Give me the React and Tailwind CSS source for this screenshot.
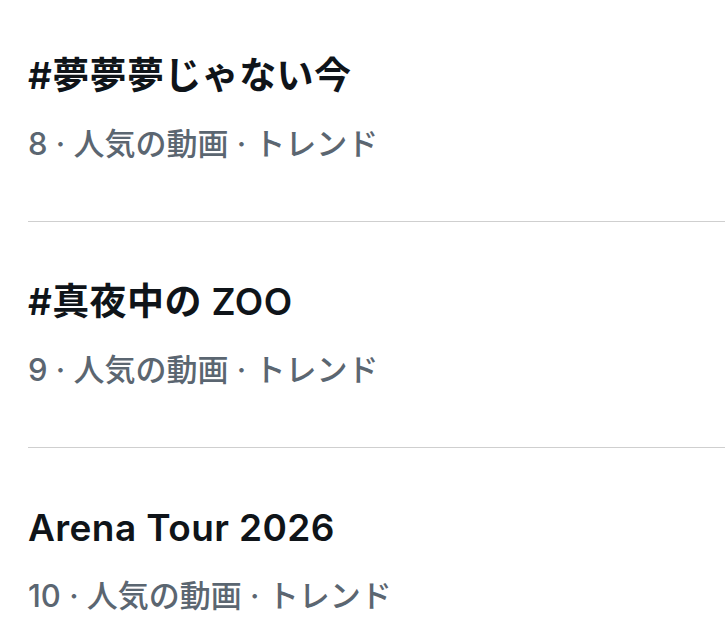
const trends = [
  { title: "#夢夢夢じゃない今", rank: 8 },
  { title: "#真夜中の ZOO", rank: 9 },
  { title: "Arena Tour 2026", rank: 10 },
];

function TrendItem({ title, rank, first, last }) {
  return (
    <div className={`${last ? "" : "border-b border-[#cfcfcf]"}`}>
      <div className={`${first ? "pt-[54px]" : "pt-[58px]"} pb-[57px] pr-4`}>
        <div className="text-[37px] leading-[44px] font-semibold text-[#0f1419] tracking-[0.4px]">
          {title}
        </div>
        <div className="mt-[26px] text-[31px] leading-[40px] font-medium text-[#5b6671]">
          {rank} · 人気の動画 · トレンド
        </div>
      </div>
    </div>
  );
}

export default function App() {
  return (
    <div
      className="min-h-screen bg-white pl-[28px] overflow-hidden"
      style={{ fontFamily: "Inter, 'Noto Sans CJK JP', sans-serif" }}
    >
      {trends.map((t, i) => (
        <TrendItem
          key={t.rank}
          title={t.title}
          rank={t.rank}
          first={i === 0}
          last={i === trends.length - 1}
        />
      ))}
    </div>
  );
}
